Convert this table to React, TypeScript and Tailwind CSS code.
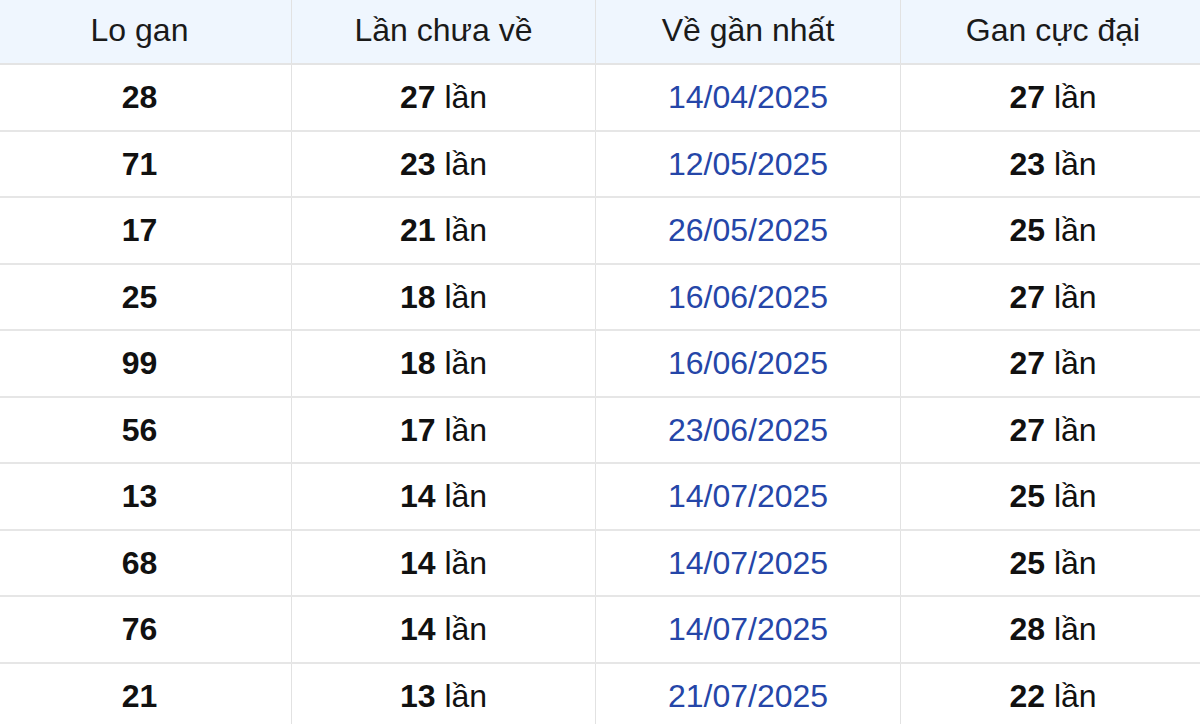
import React from "react";

const rows: [string, string, string, string][] = [
  ["28", "27", "14/04/2025", "27"],
  ["71", "23", "12/05/2025", "23"],
  ["17", "21", "26/05/2025", "25"],
  ["25", "18", "16/06/2025", "27"],
  ["99", "18", "16/06/2025", "27"],
  ["56", "17", "23/06/2025", "27"],
  ["13", "14", "14/07/2025", "25"],
  ["68", "14", "14/07/2025", "25"],
  ["76", "14", "14/07/2025", "28"],
  ["21", "13", "21/07/2025", "22"],
];

const cols = ["w-[304px]", "w-[304px]", "w-[305px]", "w-[304px]"];

export default function App() {
  return (
    <div
      className="w-[1200px] h-[724px] overflow-hidden bg-white text-[32px] text-[#111]"
      style={{ fontFamily: '"Liberation Sans", Arial, sans-serif' }}
    >
      <div className="ml-[-12px] w-[1217px]">
        <div className="flex h-[65px] bg-[#eff6fe] border-b-2 border-[#e4e4e4]">
          {["Lo gan", "Lần chưa về", "Về gần nhất", "Gan cực đại"].map((h, i) => (
            <div
              key={h}
              className={`${cols[i]} flex items-center justify-center pb-[3px] text-[#1a1a1a] ${i < 3 ? "border-r border-[#e2e2e2]" : ""}`}
            >
              {h}
            </div>
          ))}
        </div>
        {rows.map((r, idx) => (
          <div key={idx} className="flex h-[66.5px] border-b-2 border-[#e6e6e6]">
            <div className={`${cols[0]} flex items-center justify-center font-bold border-r border-[#e2e2e2]`}>
              {r[0]}
            </div>
            <div className={`${cols[1]} flex items-center justify-center border-r border-[#e2e2e2]`}>
              <span className="font-bold">{r[1]}</span>
              <span>&nbsp;lần</span>
            </div>
            <div className={`${cols[2]} flex items-center justify-center text-[#2546a8] border-r border-[#e2e2e2]`}>
              {r[2]}
            </div>
            <div className={`${cols[3]} flex items-center justify-center`}>
              <span className="font-bold">{r[3]}</span>
              <span>&nbsp;lần</span>
            </div>
          </div>
        ))}
      </div>
    </div>
  );
}
